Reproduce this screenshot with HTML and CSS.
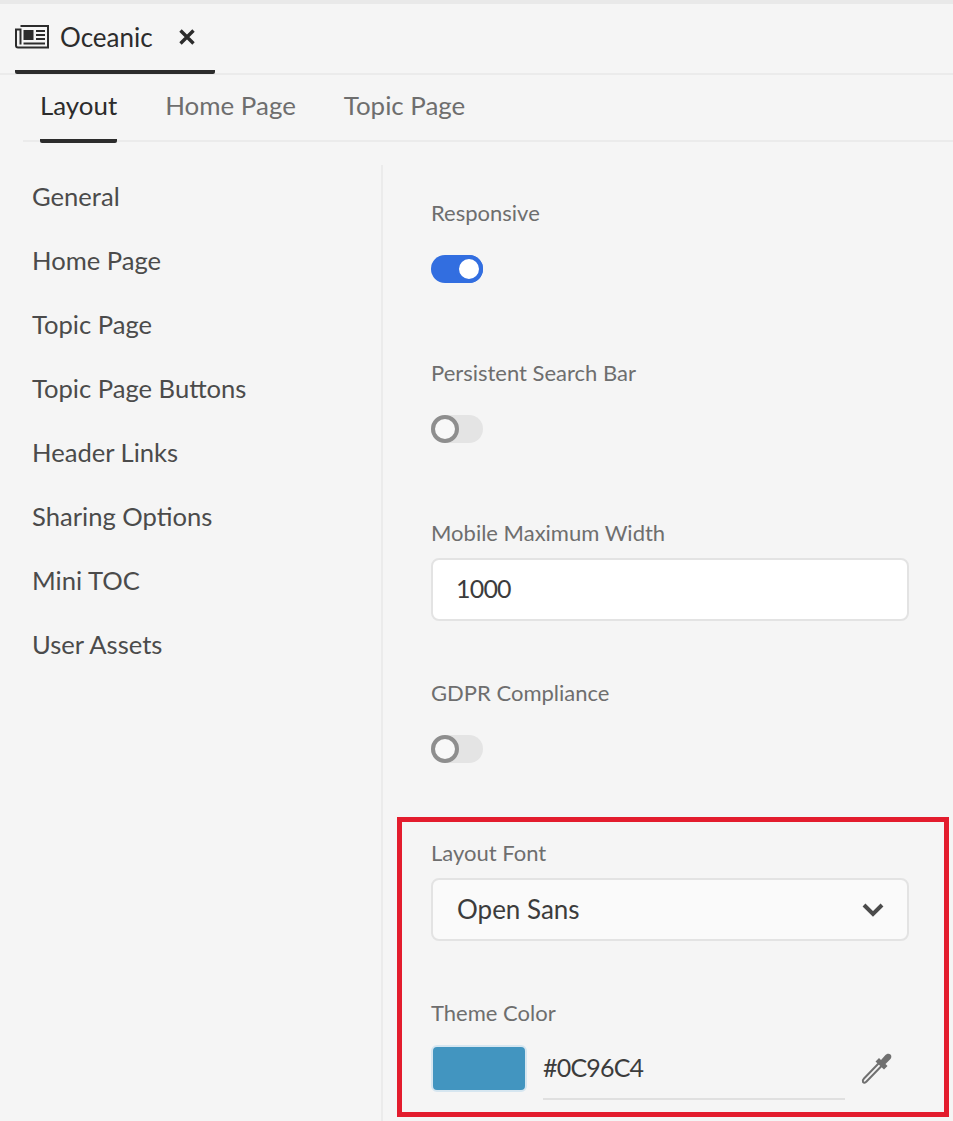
FILE: index.html
```html
<!DOCTYPE html>
<html lang="en">
<head>
<meta charset="utf-8">
<title>Oceanic</title>
<link rel="stylesheet" href="styles.css">
</head>
<body>
<div class="page">
  <div class="doc-bar">
    <div class="doc-tab">
      <svg class="doc-icon" viewBox="0 0 34 24" width="34" height="24" aria-hidden="true">
        <path class="ln" d="M5.5 1H33V22.5H3A2 2 0 0 1 1 20.5V4.5H5.5V19.5"/>
        <rect class="fl" x="8.5" y="5" width="10" height="10"/>
        <path class="ln2" d="M21 6H30M21 10H30M21 14H30M8.5 18.5H30"/>
      </svg>
      <span class="doc-title">Oceanic</span>
      <svg class="doc-close" viewBox="0 0 18 18" width="18" height="18" aria-hidden="true"><path d="M2.5 2.5L15.5 15.5M15.5 2.5L2.5 15.5"/></svg>
    </div>
  </div>
  <div class="tabs">
    <span class="tab tab-active">Layout</span>
    <span class="tab">Home Page</span>
    <span class="tab">Topic Page</span>
  </div>
  <div class="body">
    <nav class="side">
      <a class="side-item">General</a>
      <a class="side-item">Home Page</a>
      <a class="side-item">Topic Page</a>
      <a class="side-item">Topic Page Buttons</a>
      <a class="side-item">Header Links</a>
      <a class="side-item">Sharing Options</a>
      <a class="side-item">Mini TOC</a>
      <a class="side-item">User Assets</a>
    </nav>
    <main class="main">
      <div class="field">
        <div class="label">Responsive</div>
        <div class="toggle toggle-on"><span class="knob"></span></div>
      </div>
      <div class="field">
        <div class="label">Persistent Search Bar</div>
        <div class="toggle"><span class="knob"></span></div>
      </div>
      <div class="field">
        <div class="label">Mobile Maximum Width</div>
        <div class="input"><span class="num">1000</span></div>
      </div>
      <div class="field field-short">
        <div class="label">GDPR Compliance</div>
        <div class="toggle"><span class="knob"></span></div>
      </div>
      <section class="highlight">
        <div class="label">Layout Font</div>
        <div class="input select">
          <span>Open Sans</span>
          <svg class="chev" viewBox="0 0 24 16" width="24" height="16" aria-hidden="true"><path d="M3 3L12 12L21 3"/></svg>
        </div>
        <div class="label label-color">Theme Color</div>
        <div class="color-row">
          <span class="swatch"></span>
          <span class="hex"><span class="num">#0C96C4</span></span>
          <svg class="dropper" viewBox="0 0 34 34" width="34" height="34" aria-hidden="true">
            <path class="dr-body" d="M20 12L5 27.5C3.5 29 3.5 30 4 31C5 32 6 32 7.5 30.5L22.5 15"/>
            <path class="dr-top" d="M16.5 10.5L20 7L22 9L26 4.5C27.5 2.5 30 2 31.5 3.5C33 5 32.5 7.5 30.5 9L26.5 13L28.5 15L25 18.5Z"/>
          </svg>
        </div>
      </section>
    </main>
  </div>
</div>
</body>
</html>
```

FILE: styles.css
```css
* { box-sizing: border-box; }
html, body { margin: 0; padding: 0; }
body { background: #f5f5f5; font-family: "Lato", "Noto Sans", sans-serif; color: #4b4b4b; }
.page { width: 953px; height: 1121px; overflow: hidden; border-top: 4px solid #e9e9e9; }

.doc-bar { height: 71px; border-bottom: 2px solid #ebebeb; padding-left: 15px; }
.doc-tab { width: 200px; height: 70px; border-bottom: 4px solid #2c2c2c; border-radius: 0 0 2px 2px; display: flex; align-items: center; }
.doc-icon { flex: none; }
.ln { fill: none; stroke: #2c2c2c; stroke-width: 2; }
.ln2 { fill: none; stroke: #2c2c2c; stroke-width: 1.8; }
.fl { fill: #2c2c2c; }
.doc-title { font-size: 26px; color: #2c2c2c; margin-left: 11px; }
.doc-close { margin-left: 25px; fill: none; stroke: #2c2c2c; stroke-width: 3.4; flex: none; }

.tabs { margin-left: 23px; height: 67px; border-bottom: 2px solid #ebebeb; display: flex; gap: 48px; padding-left: 17px; }
.tab { font-size: 25.9px; color: #6e6e6e; height: 68px; line-height: 60px; }
.tab-active { color: #2c2c2c; border-bottom: 4px solid #2c2c2c; border-radius: 2px; }

.body { display: flex; margin-top: 23px; }
.side { width: 383px; height: 960px; border-right: 2px solid #ebebeb; flex: none; display: flex; flex-direction: column; padding-left: 32px; }
.side-item { height: 64px; line-height: 63px; font-size: 25.6px; color: #4b4b4b; }

.main { flex: 1; padding: 32px 4px 0 14px; }
.field { height: 160px; padding-left: 34px; }
.field-short { height: 140px; }
.label { font-size: 22px; line-height: 32px; color: #6e6e6e; }
.toggle { width: 52px; height: 28px; border-radius: 14px; background: #e4e4e4; margin-top: 26px; position: relative; }
.toggle .knob { position: absolute; left: 0; top: 0; width: 28px; height: 28px; border-radius: 50%; background: #f8f8f8; border: 4px solid #8e8e8e; }
.toggle-on { background: #326ee0; }
.toggle-on .knob { left: 24px; background: #fff; border-color: #326ee0; }

.input { width: 478px; height: 63px; margin-top: 9px; background: #fff; border: 2px solid #e3e3e3; border-radius: 8px; font-size: 26px; line-height: 57px; padding-left: 23px; color: #3c3c3c; }
.num { font-size: 25px; letter-spacing: -0.8px; }

.highlight { width: 552px; height: 300px; border: 5px solid #e31c2d; padding: 15px 0 0 29px; }
.select { background: #fafafa; display: flex; align-items: center; justify-content: space-between; padding: 0 22px 0 24px; }
.chev { fill: none; stroke: #4b4b4b; stroke-width: 4; flex: none; }
.label-color { margin-top: 56px; }
.color-row { display: flex; margin-top: 16px; height: 55px; }
.swatch { width: 96px; height: 47px; background: #4295c0; border: 2px solid #d6e6f0; border-radius: 6px; flex: none; }
.hex { width: 302px; height: 55px; margin-left: 16px; border-bottom: 2px solid #e0e0e0; font-size: 26px; line-height: 44px; color: #3c3c3c; }
.dropper { flex: none; margin: 6px 0 0 14px; }
.dr-body { fill: none; stroke: #707070; stroke-width: 2; }
.dr-top { fill: #707070; }
```
